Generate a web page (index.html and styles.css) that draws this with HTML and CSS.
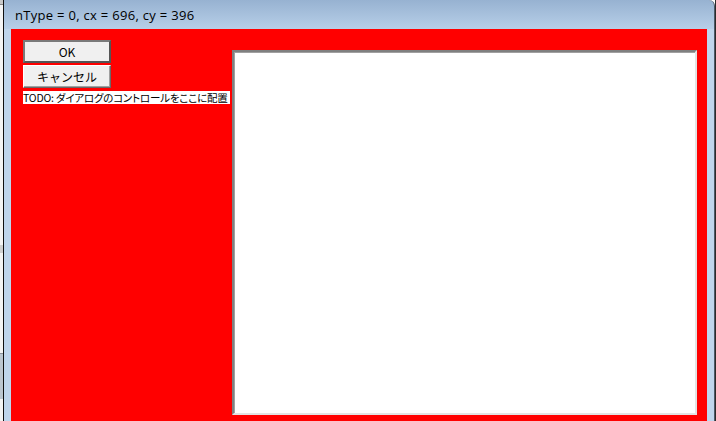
FILE: index.html
```html
<!DOCTYPE html>
<html lang="ja">
<head>
<meta charset="utf-8">
<title>nType = 0, cx = 696, cy = 396</title>
<link rel="stylesheet" href="styles.css">
</head>
<body>
<div class="desk">
  <div class="desk-edge">
    <span class="edge-mark top"></span>
    <span class="edge-mark mid"></span>
    <span class="edge-mark low"></span>
  </div>
  <div class="window">
    <div class="caption">nType = 0, cx = 696, cy = 396</div>
    <div class="frame">
      <div class="client">
        <div class="controls">
          <button class="btn default">OK</button>
          <button class="btn">キャンセル</button>
          <span class="static">TODO: ダイアログのコントロールをここに配置</span>
        </div>
        <div class="panel"></div>
      </div>
    </div>
  </div>
  <div class="desk-edge right"></div>
</div>
</body>
</html>
```

FILE: styles.css
```css
html, body {
  margin: 0;
  padding: 0;
}

body {
  width: 716px;
  height: 421px;
  overflow: hidden;
  background: #ffffff;
  font-family: "Noto Sans CJK JP", "Noto Sans", sans-serif;
}

.desk {
  display: flex;
  height: 421px;
}

/* strip of the desktop showing beside the window */
.desk-edge {
  width: 3px;
  flex: none;
  display: flex;
  flex-direction: column;
  background: #f4f4f4;
}

.desk-edge.right {
  width: 1px;
  background: #2b2b2b;
}

.edge-mark {
  display: block;
  background: #c8c8c8;
}

.edge-mark.top {
  height: 4px;
  border-bottom: 1px solid #888;
  margin-bottom: 240px;
}

.edge-mark.mid {
  height: 8px;
  background: #d0d0d0;
  margin-bottom: 100px;
}

.edge-mark.low {
  height: 45px;
  background: #bcc6d0;
  border-top: 1px solid #8a9099;
}

.window {
  flex: none;
  width: 710px;
  display: flex;
  flex-direction: column;
  border-left: 1px solid #101010;
  border-right: 1px solid #4c5866;
  border-top-right-radius: 6px;
  background: linear-gradient(to bottom, #97b2d1 0px, #b7cfe8 29px, #bed4ec 30px);
  overflow: hidden;
}

.caption {
  height: 29px;
  flex: none;
  box-sizing: border-box;
  padding: 6px 0 0 11px;
  font-family: "Open Sans", "Noto Sans", sans-serif;
  font-size: 13px;
  line-height: 18px;
  color: #000;
  letter-spacing: 0.3px;
}

.frame {
  flex: 1;
  padding: 0 7px 0 7px;
  background: #bfd5ec;
}

.client {
  width: 696px;
  height: 396px;
  box-sizing: border-box;
  background: #ff0000;
  display: flex;
  padding: 11px 10px 10px 12px;
}

.controls {
  width: 209px;
  flex: none;
  display: flex;
  flex-direction: column;
  align-items: flex-start;
}

.btn {
  width: 88px;
  height: 23px;
  margin: 0 0 2px 0;
  padding: 0;
  box-sizing: border-box;
  background: #f0f0f0;
  border: 1px solid;
  border-color: #ffffff #696969 #696969 #ffffff;
  box-shadow: inset -1px -1px 0 #a0a0a0;
  font-family: "Noto Sans CJK JP", sans-serif;
  font-size: 12px;
  line-height: 19px;
  color: #000;
}

.btn.default {
  border: 2px solid #7a7a7a;
  border-right-color: #555;
  border-bottom-color: #555;
  box-shadow: none;
  line-height: 17px;
  margin-bottom: 2px;
}

.static {
  margin-top: 1px;
  width: 207px;
  height: 13px;
  background: #ffffff;
  font-family: "Noto Sans CJK JP", sans-serif;
  font-feature-settings: "palt";
  font-size: 10.5px;
  letter-spacing: -0.2px;
  line-height: 13px;
  white-space: nowrap;
  overflow: hidden;
  color: #000;
}

.panel {
  flex: 1;
  margin-top: 10px;
  background: #ffffff;
  border: 2px solid;
  border-color: #808080 #e3e3e3 #e3e3e3 #808080;
  box-shadow: inset 1px 1px 0 #a0a0a0;
}
```
